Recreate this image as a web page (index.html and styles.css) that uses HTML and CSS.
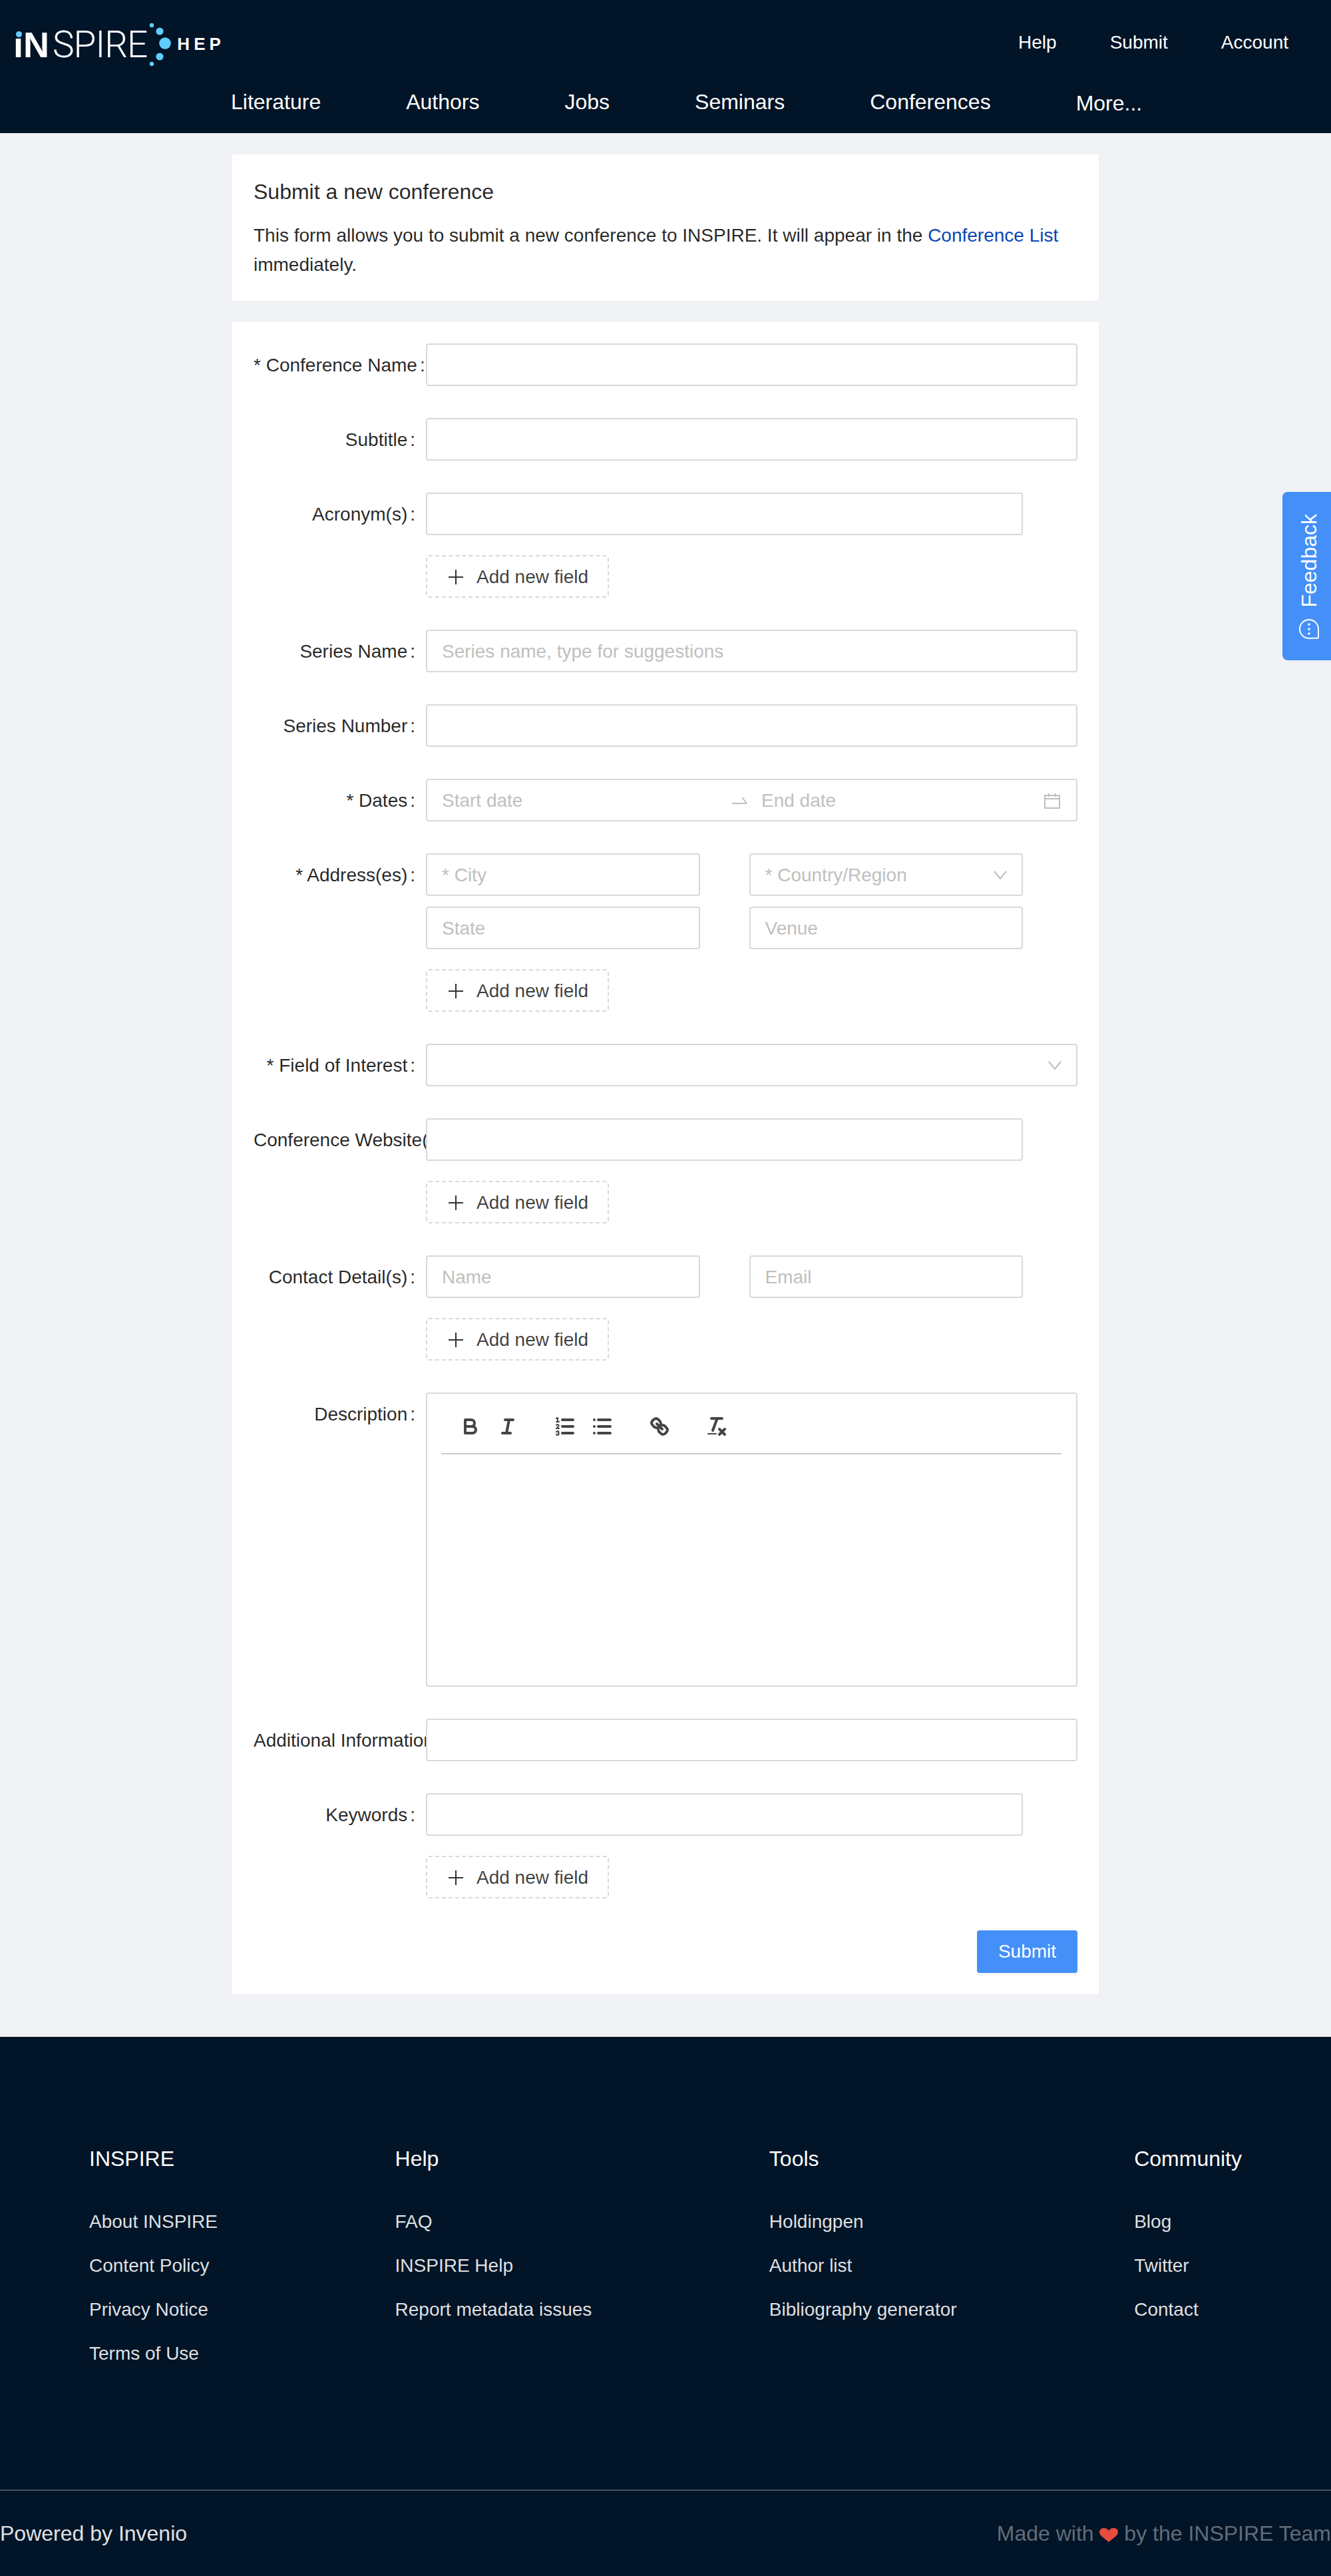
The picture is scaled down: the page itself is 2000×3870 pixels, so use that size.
FILE: index.html
```html
<!DOCTYPE html>
<html lang="en">
<head>
    <meta charset="UTF-8">
    <meta name="viewport" content="width=device-width, initial-scale=1.0">
    <title>Submit a new conference - INSPIRE</title>
    <link rel="stylesheet" href="styles.css">
</head>
<body>

    <header class="header">
        <div class="header-top">
            <a class="logo">
                <span class="logo-in">ıN<i class="logo-dot"></i></span><span class="logo-spire">SPIRE</span>
                <svg class="logo-dots" width="40" height="68" viewBox="0 0 40 68">
                    <circle cx="7" cy="4" r="3.2"/>
                    <circle cx="19" cy="13" r="5.6"/>
                    <circle cx="27" cy="31" r="8.8"/>
                    <circle cx="19" cy="51" r="5.6"/>
                    <circle cx="7" cy="62" r="3.2"/>
                </svg>
                <span class="logo-hep">HEP</span>
            </a>
            <nav class="top-links">
                <a>Help</a>
                <a>Submit</a>
                <a>Account</a>
            </nav>
        </div>
        <nav class="main-nav">
            <a>Literature</a>
            <a>Authors</a>
            <a>Jobs</a>
            <a>Seminars</a>
            <a>Conferences</a>
            <a class="more">More...</a>
        </nav>
    </header>

    <main class="main">
        <section class="card intro">
            <h3>Submit a new conference</h3>
            <p>This form allows you to submit a new conference to INSPIRE. It will appear in the <a>Conference List</a> immediately.</p>
        </section>

        <form class="card form">
            <div class="row">
                <label>* Conference Name</label>
                <div class="field"><input type="text"></div>
            </div>
            <div class="row">
                <label>Subtitle</label>
                <div class="field"><input type="text"></div>
            </div>
            <div class="row">
                <label>Acronym(s)</label>
                <div class="field array">
                    <input type="text">
                    <button type="button" class="add-btn"><svg width="28" height="28" viewBox="0 0 28 28"><path d="M14 3v22M3 14h22"/></svg>Add new field</button>
                </div>
            </div>
            <div class="row">
                <label>Series Name</label>
                <div class="field"><input type="text" placeholder="Series name, type for suggestions"></div>
            </div>
            <div class="row">
                <label>Series Number</label>
                <div class="field"><input type="text"></div>
            </div>
            <div class="row">
                <label>* Dates</label>
                <div class="field">
                    <div class="range">
                        <input type="text" class="range-start" placeholder="Start date">
                        <svg class="range-arrow" width="22" height="12" viewBox="0 0 22 12"><path d="M0 10h22l-7-9"/></svg>
                        <input type="text" class="range-end" placeholder="End date">
                        <svg class="range-cal" width="24" height="24" viewBox="0 0 24 24"><path d="M1 4h22v19H1zM1 9h22M7 1v5M17 1v5"/></svg>
                    </div>
                </div>
            </div>
            <div class="row">
                <label>* Address(es)</label>
                <div class="field array">
                    <div class="pair">
                        <input type="text" placeholder="* City">
                        <div class="select"><span>* Country/Region</span><svg width="20" height="13" viewBox="0 0 20 13"><path d="M1 1l9 11 9-11"/></svg></div>
                        <input type="text" placeholder="State">
                        <input type="text" placeholder="Venue">
                    </div>
                    <button type="button" class="add-btn"><svg width="28" height="28" viewBox="0 0 28 28"><path d="M14 3v22M3 14h22"/></svg>Add new field</button>
                </div>
            </div>
            <div class="row">
                <label>* Field of Interest</label>
                <div class="field">
                    <div class="select"><span></span><svg width="20" height="13" viewBox="0 0 20 13"><path d="M1 1l9 11 9-11"/></svg></div>
                </div>
            </div>
            <div class="row">
                <label>Conference Website(s)</label>
                <div class="field array">
                    <input type="text">
                    <button type="button" class="add-btn"><svg width="28" height="28" viewBox="0 0 28 28"><path d="M14 3v22M3 14h22"/></svg>Add new field</button>
                </div>
            </div>
            <div class="row">
                <label>Contact Detail(s)</label>
                <div class="field array">
                    <div class="pair">
                        <input type="text" placeholder="Name">
                        <input type="text" placeholder="Email">
                    </div>
                    <button type="button" class="add-btn"><svg width="28" height="28" viewBox="0 0 28 28"><path d="M14 3v22M3 14h22"/></svg>Add new field</button>
                </div>
            </div>
            <div class="row">
                <label>Description</label>
                <div class="field">
                    <div class="editor">
                        <div class="toolbar">
                            <span class="tool-group">
                                <span class="tool"><svg viewBox="0 0 18 18"><path d="M5,4H9.5A2.5,2.5,0,0,1,12,6.5v0A2.5,2.5,0,0,1,9.5,9H5V4Z"/><path d="M5,9h5.5A2.5,2.5,0,0,1,13,11.5v0A2.5,2.5,0,0,1,10.5,14H5V9Z"/></svg></span>
                                <span class="tool"><svg viewBox="0 0 18 18"><path d="M7 4h6M5 14h6M8 14l2-10"/></svg></span>
                            </span>
                            <span class="tool-group">
                                <span class="tool"><svg viewBox="0 0 18 18"><path d="M7 4h8M7 9h8M7 14h8"/><path class="thin" d="M2.5 5.5h2M3.5 5.5v-3l-1 .5M4.5 10.5h-2c0-.234 1.85-1.076 1.85-2.234A.959.959 0 0 0 2.5 8.156M2.5 14.846a.959.959 0 0 0 1.85-.109A.7.7 0 0 0 3.75 14a.688.688 0 0 0 .6-.736.959.959 0 0 0-1.85-.109"/></svg></span>
                                <span class="tool"><svg viewBox="0 0 18 18"><path d="M6 4h9M6 9h9M6 14h9M3 4h0M3 9h0M3 14h0"/></svg></span>
                            </span>
                            <span class="tool-group">
                                <span class="tool"><svg viewBox="0 0 18 18"><path d="M7 7l4 4"/><path d="M8.9,4.577a3.476,3.476,0,0,1,.36,4.679A3.476,3.476,0,0,1,4.577,8.9C3.185,7.5,2.035,6.4,4.217,4.217S7.5,3.185,8.9,4.577Z"/><path d="M13.423,9.1a3.476,3.476,0,0,0-4.679-.36,3.476,3.476,0,0,0,.36,4.679c1.392,1.392,2.5,2.542,4.679.36S14.815,10.5,13.423,9.1Z"/></svg></span>
                            </span>
                            <span class="tool-group">
                                <span class="tool"><svg viewBox="0 0 18 18"><path d="M5 3h8M6 12l3.35-9M11 11l4 4M15 11l-4 4"/><path class="thin" d="M2.5 14.5h6"/></svg></span>
                            </span>
                        </div>
                    </div>
                </div>
            </div>
            <div class="row">
                <label>Additional Information</label>
                <div class="field"><input type="text"></div>
            </div>
            <div class="row">
                <label>Keywords</label>
                <div class="field array">
                    <input type="text">
                    <button type="button" class="add-btn"><svg width="28" height="28" viewBox="0 0 28 28"><path d="M14 3v22M3 14h22"/></svg>Add new field</button>
                </div>
            </div>
            <div class="form-actions">
                <button type="submit" class="submit-btn">Submit</button>
            </div>
        </form>
    </main>

    <a class="feedback">
        <span>Feedback</span>
        <svg width="32" height="32" viewBox="0 0 32 32">
            <path class="bubble" d="M30 16A14 14 0 1 0 16 30c4.500 0 8.500-.3 13-.3.6 0 1-.4 1-1Z"/>
            <circle cx="16" cy="9" r="1.800"/>
            <circle cx="16" cy="16" r="1.800"/>
            <circle cx="16" cy="23" r="1.800"/>
        </svg>
    </a>

    <footer class="footer">
        <div class="footer-cols">
            <div class="footer-col">
                <h4>INSPIRE</h4>
                <a>About INSPIRE</a>
                <a>Content Policy</a>
                <a>Privacy Notice</a>
                <a>Terms of Use</a>
            </div>
            <div class="footer-col">
                <h4>Help</h4>
                <a>FAQ</a>
                <a>INSPIRE Help</a>
                <a>Report metadata issues</a>
            </div>
            <div class="footer-col">
                <h4>Tools</h4>
                <a>Holdingpen</a>
                <a>Author list</a>
                <a>Bibliography generator</a>
            </div>
            <div class="footer-col">
                <h4>Community</h4>
                <a>Blog</a>
                <a>Twitter</a>
                <a>Contact</a>
            </div>
        </div>
        <div class="footer-bottom">
            <span class="powered">Powered by Invenio</span>
            <span class="made">Made with <svg width="28" height="21" viewBox="0 0 28 21"><path d="M14 21C9 16 0 12 0 6c0-3.500 2.800-6 6.500-6C10 0 12.500 1.500 14 4c1.500-2.500 4-4 7.500-4C25.200 0 28 2.500 28 6c0 6-9 10-14 15Z"/></svg> by the INSPIRE Team</span>
        </div>
    </footer>

</body>
</html>
```

FILE: styles.css
```css
* { box-sizing: border-box; }
body {
    margin: 0;
    font-family: "Liberation Sans", Arial, sans-serif;
    font-size: 28px;
    line-height: 44px;
    color: rgba(0, 0, 0, 0.85);
    background: #f0f2f5;
    position: relative;
}

/* header */
.header {
    height: 200px;
    background: #021427;
    color: white;
}
.header-top {
    height: 131px;
    display: flex;
    justify-content: space-between;
}
.logo {
    display: flex;
    align-items: flex-start;
    margin-left: 20px;
    padding-top: 40px;
    font-size: 54px;
    line-height: 54px;
}
.logo-in {
    font-weight: bold;
    position: relative;
}
.logo-dot {
    position: absolute;
    left: 4px;
    top: 7px;
    width: 9px;
    height: 9px;
    border-radius: 50%;
    background: #62cdfb;
}
.logo-spire {
    font-family: Roboto, sans-serif;
    font-weight: 300;
    font-size: 55px;
    letter-spacing: -1px;
    margin-left: 5px;
}
.logo-dots {
    margin: -6px 0 0 0;
    fill: #62cdfb;
}
.logo-hep {
    font-size: 26px;
    line-height: 26px;
    font-weight: bold;
    letter-spacing: 6px;
    margin: 13px 0 0 5px;
}
.top-links {
    display: flex;
    gap: 80px;
    padding: 42px 64px 0 0;
}
.main-nav {
    display: flex;
    align-items: flex-start;
    gap: 128px;
    padding-left: 347px;
    font-size: 32px;
}
.main-nav .more { margin-top: 2px; }

/* cards */
.main {
    width: 1302px;
    margin-left: 349px;
    padding: 32px 0 64px;
}
.card {
    background: white;
    padding: 32px;
}
.intro { margin-bottom: 32px; }
.intro h3 {
    margin: 0 0 20px;
    font-size: 32px;
    line-height: 48px;
    font-weight: normal;
}
.intro p { margin: 0; }
.intro a { color: #0a46b4; }

/* form */
.row {
    display: flex;
    margin-bottom: 48px;
}
.row label {
    width: 259px;
    height: 64px;
    flex-shrink: 0;
    padding-top: 1px;
    line-height: 64px;
    text-align: right;
    white-space: nowrap;
    overflow: hidden;
}
.row label::after {
    content: ":";
    margin: 0 16px 0 4px;
}
.field { flex: 1; }
.array { width: 897px; flex: none; }
input, .select, .range {
    width: 100%;
    height: 64px;
    padding: 1px 22px 0;
    border: 2px solid #d9d9d9;
    border-radius: 4px;
    background: white;
    font: inherit;
    color: inherit;
    outline: none;
}
input::placeholder, .select span { color: #bfbfbf; opacity: 1; }
.select, .range {
    display: flex;
    align-items: center;
    justify-content: space-between;
}
.select svg path, .range svg path {
    fill: none;
    stroke: #bfbfbf;
    stroke-width: 2;
}
.range { justify-content: flex-start; }
.range input {
    height: 58px;
    padding: 0;
    border: none;
    border-radius: 0;
    background: none;
}
.range-start { width: 436px; flex: none; }
.range-arrow { flex: none; }
.range-end { flex: 1; margin-left: 22px; }
.range-cal { flex: none; margin-right: 2px; }
.pair {
    display: grid;
    grid-template-columns: 1fr 1fr;
    column-gap: 74px;
    row-gap: 16px;
}
.add-btn {
    display: flex;
    align-items: center;
    gap: 17px;
    height: 64px;
    margin-top: 30px;
    padding: 1px 29px 0 29px;
    border: 2px dashed #d9d9d9;
    border-radius: 4px;
    background: white;
    font: inherit;
    color: rgba(0, 0, 0, 0.75);
}
.add-btn svg path {
    fill: none;
    stroke: #333;
    stroke-width: 2;
}

/* description editor */
.editor {
    height: 442px;
    padding: 9px 22px 0 21px;
    border: 2px solid #d9d9d9;
    border-radius: 4px;
}
.toolbar {
    display: flex;
    padding: 16px;
    border-bottom: 2px solid #ccc;
}
.tool-group {
    display: flex;
    margin-right: 30px;
}
.tool {
    width: 56px;
    height: 48px;
    padding: 6px 10px;
}
.tool svg {
    display: block;
    width: 36px;
    height: 36px;
}
.tool svg path {
    fill: none;
    stroke: #444;
    stroke-width: 2;
    stroke-linecap: round;
    stroke-linejoin: round;
}
.tool svg path.thin { stroke-width: 1; }

.form-actions {
    display: flex;
    justify-content: flex-end;
}
.submit-btn {
    width: 151px;
    height: 64px;
    border: none;
    border-radius: 4px;
    background: #4490f8;
    color: white;
    font: inherit;
    box-shadow: 0 4px 0 rgba(0, 0, 0, 0.04);
}

/* feedback tab */
.feedback {
    position: absolute;
    top: 739px;
    right: 0;
    width: 73px;
    height: 253px;
    display: flex;
    flex-direction: column;
    align-items: center;
    gap: 16px;
    padding: 33px 0 0 6px;
    border-radius: 8px 0 0 8px;
    background: #4490f8;
    color: white;
    font-size: 32px;
    line-height: 40px;
}
.feedback span {
    writing-mode: vertical-rl;
    transform: rotate(180deg);
}
.feedback svg { fill: white; }
.feedback .bubble {
    fill: none;
    stroke: white;
    stroke-width: 2;
}

/* footer */
.footer {
    height: 810px;
    background: #021427;
    color: white;
}
.footer-cols {
    display: flex;
    justify-content: space-between;
    height: 680px;
    padding: 159px 134px 0;
}
.footer-col h4 {
    margin: 0 0 49px;
    font-size: 32px;
    line-height: 48px;
    font-weight: normal;
}
.footer-col a {
    display: block;
    margin-bottom: 22px;
    color: rgba(255, 255, 255, 0.88);
}
.footer-bottom {
    display: flex;
    justify-content: space-between;
    padding-top: 40px;
    border-top: 2px solid #45515f;
    font-size: 32px;
    line-height: 48px;
}
.powered { color: rgba(255, 255, 255, 0.9); }
.made { color: #626c78; }
.made svg {
    fill: #e74c3c;
    vertical-align: -2px;
}
```
